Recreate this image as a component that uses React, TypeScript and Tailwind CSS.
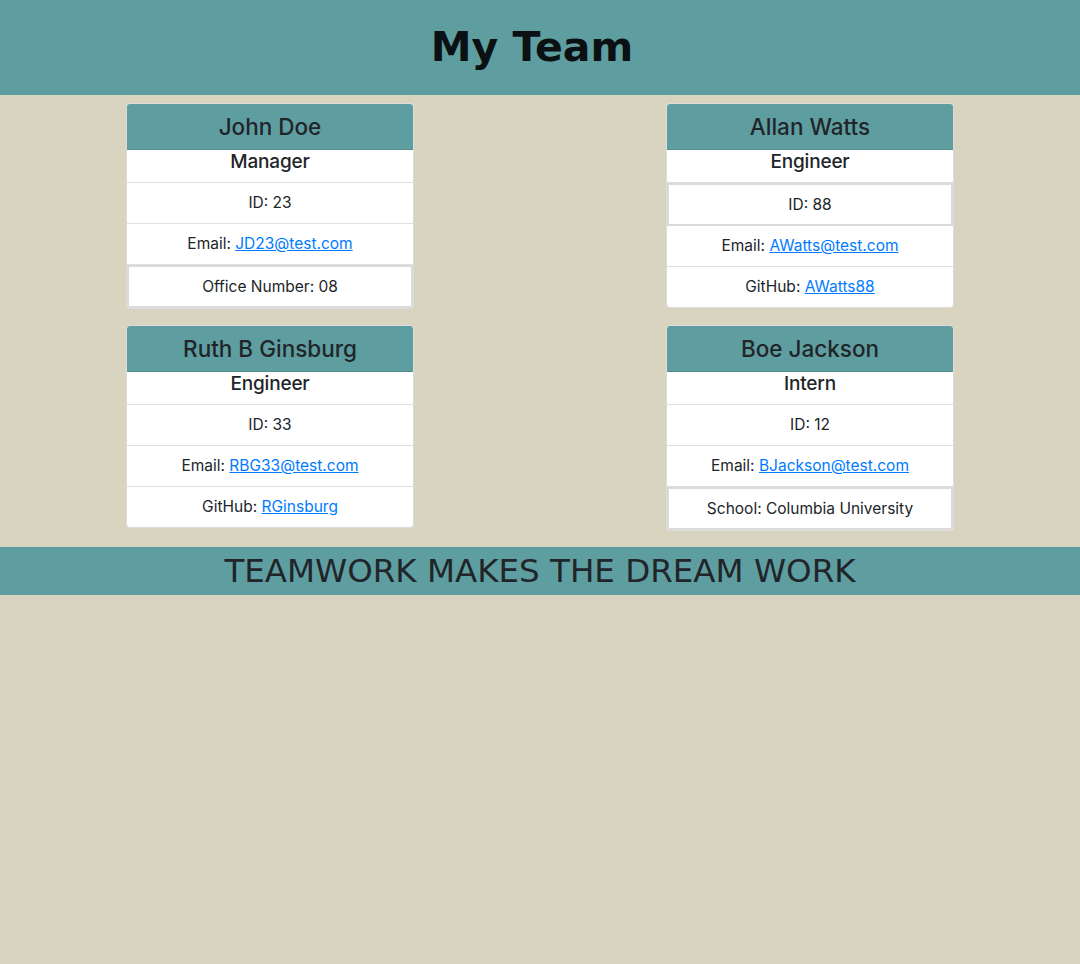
import React from "react";

type Item = { label: string; value: string; link?: boolean; boxed?: boolean };
type Member = { name: string; role: string; items: Item[] };

const members: Member[] = [
  {
    name: "John Doe",
    role: "Manager",
    items: [
      { label: "ID", value: "23" },
      { label: "Email", value: "JD23@test.com", link: true },
      { label: "Office Number", value: "08", boxed: true },
    ],
  },
  {
    name: "Allan Watts",
    role: "Engineer",
    items: [
      { label: "ID", value: "88", boxed: true },
      { label: "Email", value: "AWatts@test.com", link: true },
      { label: "GitHub", value: "AWatts88", link: true },
    ],
  },
  {
    name: "Ruth B Ginsburg",
    role: "Engineer",
    items: [
      { label: "ID", value: "33" },
      { label: "Email", value: "RBG33@test.com", link: true },
      { label: "GitHub", value: "RGinsburg", link: true },
    ],
  },
  {
    name: "Boe Jackson",
    role: "Intern",
    items: [
      { label: "ID", value: "12" },
      { label: "Email", value: "BJackson@test.com", link: true },
      { label: "School", value: "Columbia University", boxed: true },
    ],
  },
];

function Card({ m }: { m: Member }) {
  return (
    <div className="my-2 w-[288px] self-start overflow-hidden rounded-[4px] border border-[#dcdcdc] bg-white text-[#212529]">
      <div className="flex h-[46px] items-center justify-center border-b border-[#578f91] bg-[#5F9EA0] text-[22.5px] font-medium leading-[28px]">
        {m.name}
      </div>
      <div className="flex h-[33px] items-start justify-center border-b border-[#dfdfdf] text-[19px] font-medium leading-[24px] tracking-[-0.01em]">
        {m.role}
      </div>
      {m.items.map((it, i) => {
        const last = i === m.items.length - 1;
        const cls = it.boxed
          ? "flex h-[43px] items-center justify-center border-2 border-[#dadada] text-[15.5px] leading-[24px]"
          : `flex items-center justify-center text-[15.5px] leading-[24px] ${last ? "h-[40px]" : "h-[41px] border-b border-[#dfdfdf]"}`;
        return (
          <div key={i} className={cls}>
            <span>
              {it.label}:{" "}
              {it.link ? (
                <a href="#" className="text-[#007bff] underline">
                  {it.value}
                </a>
              ) : (
                it.value
              )}
            </span>
          </div>
        );
      })}
    </div>
  );
}

export default function App() {
  return (
    <div
      className="min-h-screen bg-[#D9D4BF]"
      style={{ fontFamily: "Inter, 'Noto Sans', sans-serif" }}
    >
      <header className="flex h-[95px] items-center justify-center bg-[#5F9EA0]">
        <h1
          className="pr-4 text-[41px] font-bold leading-none text-[#0b1012]"
          style={{ fontFamily: "'DejaVu Sans', Verdana, sans-serif" }}
        >
          My Team
        </h1>
      </header>
      <main className="grid grid-cols-2 items-start justify-items-center pb-2">
        {members.map((m) => (
          <Card key={m.name} m={m} />
        ))}
      </main>
      <footer className="flex h-[48px] items-center justify-center bg-[#5F9EA0]">
        <p
          className="text-[32.5px] leading-none text-[#212529]"
          style={{ fontFamily: "'DejaVu Sans', Verdana, sans-serif" }}
        >
          TEAMWORK MAKES THE DREAM WORK
        </p>
      </footer>
    </div>
  );
}
